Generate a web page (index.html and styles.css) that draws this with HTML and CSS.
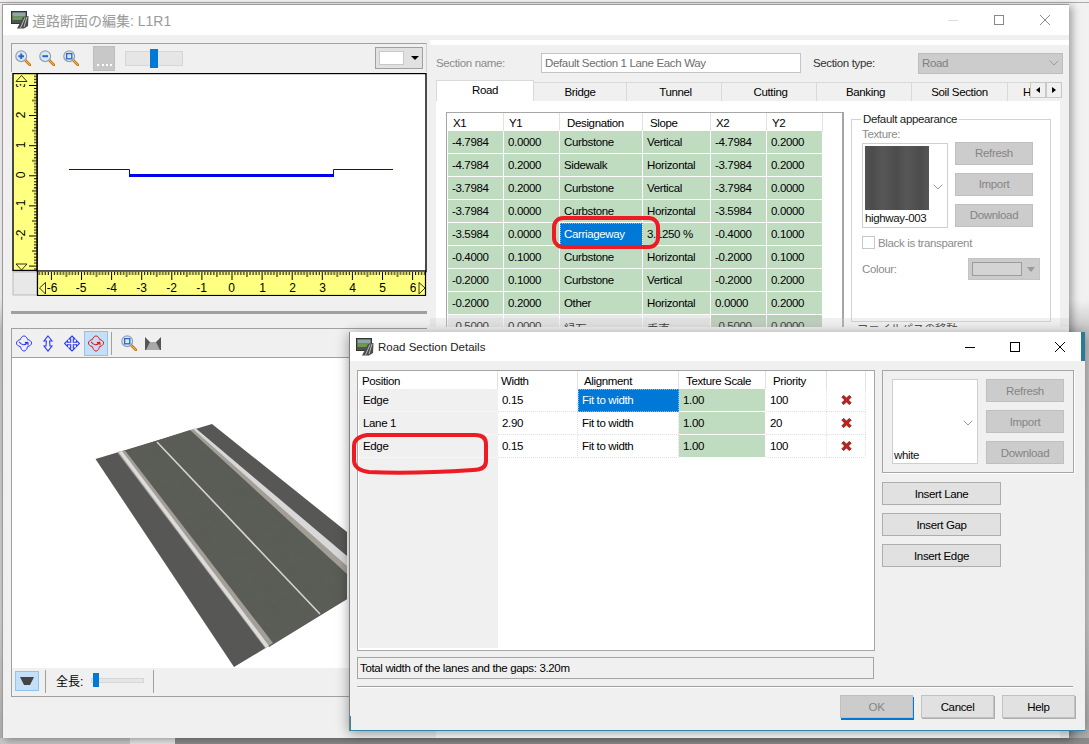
FILE: index.html
```html
<!DOCTYPE html>
<html lang="ja">
<head>
<meta charset="utf-8">
<title>道路断面の編集</title>
<link rel="stylesheet" href="styles.css">
</head>
<body>
<svg class="defs" width="0" height="0" aria-hidden="true">
  <defs>
    <symbol id="app" viewBox="0 0 18 18">
      <rect x="0.5" y="0.5" width="15" height="12" fill="#4a5650" stroke="#333"/>
      <rect x="1.500" y="1.500" width="13" height="4" fill="#8fa7a8"/>
      <rect x="1.500" y="5.500" width="13" height="3.500" fill="#6f9a4e"/>
      <path d="M6 17.500 L12 6 L17.500 5 L17 15 L13 17.500 Z" fill="#4b4b4b"/>
      <path d="M9.500 17 L14 6.500 M13 16 L16 6" stroke="#d6d6d6" stroke-width=".8" fill="none"/>
    </symbol>
    <symbol id="mag" viewBox="0 0 16 16">
      <path d="M10 10 L15 15" stroke="#c97a12" stroke-width="2.6" stroke-linecap="round"/>
      <path d="M10 10 L15 15" stroke="#f4b84e" stroke-width="1"/>
      <circle cx="6.200" cy="6.200" r="5.400" fill="#d9e8f5" stroke="#8fa3b5" stroke-width="1.200"/>
    </symbol>
    <symbol id="del" viewBox="0 0 12 12">
      <path d="M1 3 L3 1 L6 4 L9 1 L11 3 L8 6 L11 9 L9 11 L6 8 L3 11 L1 9 L4 6 Z" fill="#c4201c" stroke="#7c1a18" stroke-width="1"/>
    </symbol>
    <symbol id="orbit" viewBox="0 0 18 18">
      <path d="M9 .5 C11 .5 12.500 2.500 13 4.500 C15.500 5 17.500 6.500 17.500 8.500 C17.500 10.500 15.500 12 13 12.500 C12.500 15 11 17.500 9 17.500 C7 17.500 5.500 15 5 12.500 C2.500 12 .5 10.500 .5 8.500 C.5 6.500 2.500 5 5 4.500 C5.500 2.500 7 .5 9 .5 Z" fill="none" stroke="currentColor" stroke-width="1.100"/>
      <path d="M3.500 7 C6 11 10 12 13.500 7.500 M13.500 7.500 L13.500 11 M13.500 7.500 L10 8" fill="none" stroke="currentColor" stroke-width="1.200"/>
    </symbol>
    <symbol id="updown" viewBox="0 0 16 16">
      <path d="M8 .5 L12 5.500 L9.600 5.500 L10 10.500 L12 10.500 L8 15.500 L4 10.500 L6 10.500 L6.400 5.500 L4 5.500 Z" fill="none" stroke="currentColor" stroke-width="1.100"/>
    </symbol>
    <symbol id="cross" viewBox="0 0 16 16">
      <path d="M8 .5 L11 3.500 L9.300 3.500 L9.300 6.700 L12.500 6.700 L12.500 5 L15.500 8 L12.500 11 L12.500 9.300 L9.300 9.300 L9.300 12.500 L11 12.500 L8 15.500 L5 12.500 L6.700 12.500 L6.700 9.300 L3.500 9.300 L3.500 11 L.5 8 L3.500 5 L3.500 6.700 L6.700 6.700 L6.700 3.500 L5 3.500 Z" fill="none" stroke="currentColor" stroke-width="1.100"/>
    </symbol>
    <symbol id="chev" viewBox="0 0 10 6">
      <path d="M.7 .7 L5 5 L9.300 .7" fill="none" stroke="currentColor" stroke-width="1"/>
    </symbol>
  </defs>
</svg>

<div class="desktop">
  <section class="window main">
    <header class="titlebar">
      <svg class="appicon"><use href="#app"/></svg>
      <span class="title-main">道路断面の編集: L1R1</span>
      <span class="wctl wctl-inactive">
        <svg width="12" height="12" viewBox="0 0 12 12"><path d="M1 6.500 H11" stroke="#ddd" stroke-width="1"/></svg>
        <svg width="12" height="12" viewBox="0 0 12 12"><rect x="1.500" y="1.500" width="9" height="9" fill="none" stroke="#888"/></svg>
        <svg width="12" height="12" viewBox="0 0 12 12"><path d="M1 1 L11 11 M11 1 L1 11" stroke="#888"/></svg>
      </span>
    </header>
    <div class="mainbody">
      <div class="leftcol">
        <div class="edit-tools">
          <svg class="ti ti-first" viewBox="0 0 16 16"><use href="#mag"/><path d="M3.400 6.200 H9 M6.200 3.400 V9" stroke="#2a63c9" stroke-width="2"/></svg>
          <svg class="ti" viewBox="0 0 16 16"><use href="#mag"/><path d="M3.400 6.200 H9" stroke="#2a63c9" stroke-width="2"/></svg>
          <svg class="ti" viewBox="0 0 16 16"><use href="#mag"/><rect x="3.600" y="3.600" width="5.200" height="5.200" fill="none" stroke="#2a63c9" stroke-width="1.300"/></svg>
          <span class="grid-btn"><i></i></span>
          <span class="hslider"><i></i></span>
          <span class="colordrop"><i></i><b></b></span>
        </div>
        <svg class="profile" width="415" height="223" viewBox="12 73 415 223">
          <defs>
            <pattern id="ticksH" patternUnits="userSpaceOnUse" x="231.500" y="272" width="30.100" height="24">
              <path d="M.5 0 V8 M3.500 0 V3 M6.500 0 V3 M9.500 0 V3 M12.500 0 V3 M15.500 0 V5 M18.500 0 V3 M21.500 0 V3 M24.500 0 V3 M27.500 0 V3" stroke="#000" stroke-width="1"/>
            </pattern>
            <pattern id="ticksV" patternUnits="userSpaceOnUse" x="13" y="175.300" width="24" height="30.100">
              <path d="M24 .5 H16 M24 3.500 H21 M24 6.500 H21 M24 9.500 H21 M24 12.500 H21 M24 15.500 H19 M24 18.500 H21 M24 21.500 H21 M24 24.500 H21 M24 27.500 H21" stroke="#000" stroke-width="1"/>
            </pattern>
            <clipPath id="clip3"><rect x="13" y="84" width="24" height="3"/></clipPath>
          </defs>
          <rect x="12" y="73" width="415" height="223" fill="#f0f0f0"/>
          <rect x="37" y="73.500" width="389" height="198" fill="#fff" stroke="#000" stroke-width="1.400"/>
          <rect x="13" y="73.500" width="24" height="197" fill="#ffff80" stroke="#000" stroke-width="1.400"/>
          <rect x="13" y="73.500" width="24" height="197" fill="url(#ticksV)"/>
          <rect x="13" y="272" width="24" height="23" fill="#e8e8e8" stroke="#bbb"/>
          <rect x="37.500" y="271" width="388" height="24.500" fill="#ffff80" stroke="#000" stroke-width="1.200"/>
          <rect x="38" y="272" width="387" height="23" fill="url(#ticksH)"/>
          <g class="ruler-num" text-anchor="middle">
            <text x="52" y="292">-6</text><text x="81" y="292">-5</text><text x="111.500" y="292">-4</text><text x="141.500" y="292">-3</text>
            <text x="171.500" y="292">-2</text><text x="201.500" y="292">-1</text><text x="231.500" y="292">0</text><text x="262.500" y="292">1</text>
            <text x="292.500" y="292">2</text><text x="322.500" y="292">3</text><text x="352.500" y="292">4</text><text x="382.500" y="292">5</text><text x="413" y="292">6</text>
            <g clip-path="url(#clip3)"><text transform="translate(25 85) rotate(-90)">3</text></g>
            <text transform="translate(25 115) rotate(-90)">2</text>
            <text transform="translate(25 145) rotate(-90)">1</text>
            <text transform="translate(25 175) rotate(-90)">0</text>
            <text transform="translate(25 205) rotate(-90)">-1</text>
            <text transform="translate(25 235) rotate(-90)">-2</text>
          </g>
          <rect x="416" y="280" width="4" height="14" fill="#ffff80"/>
          <path d="M21.500 75.500 L27 81.500 L16 81.500 Z M16 264 L27 264 L21.500 270 Z M39.500 288 L45.500 282.500 L45.500 294 Z M425 288 L419 282.500 L419 294 Z" fill="#ffff80" stroke="#000" stroke-width=".8"/>
          <path d="M69 169.500 H129.500 V175 M333.500 175 V169.500 H393" fill="none" stroke="#0000f0" stroke-width="1"/>
          <rect x="129" y="174" width="205" height="3" fill="#0000f0"/>
        </svg>
        <div class="splitter"></div>
        <div class="view3d">
          <div class="view-tools">
            <svg class="vi vi-blue"><use href="#orbit"/></svg>
            <svg class="vi vi-blue"><use href="#updown"/></svg>
            <svg class="vi vi-blue"><use href="#cross"/></svg>
            <span class="vi-active"><svg class="vi vi-red"><use href="#orbit"/></svg></span>
            <span class="tsep"></span>
            <svg class="ti ti-view" viewBox="0 0 16 16"><use href="#mag"/><rect x="3.600" y="3.600" width="5.200" height="5.200" fill="none" stroke="#2a63c9" stroke-width="1.300"/></svg>
            <svg class="roadicon" viewBox="0 0 16 13"><path d="M0 0 L5 5 L5 13 L0 13 Z M16 0 L11 5 L11 13 L16 13 Z" fill="#555"/><path d="M5 5 H11 L15 13 H1 Z" fill="#a8a8a8"/></svg>
          </div>
          <svg class="roadview" width="414" height="310" viewBox="12 358 414 310">
            <defs>
              <filter id="mottle" x="0" y="0" width="100%" height="100%">
                <feTurbulence type="fractalNoise" baseFrequency="0.09" numOctaves="3" seed="4"/>
                <feColorMatrix values="0 0 0 0 0.1  0 0 0 0 0.1  0 0 0 0 0.09  0.5 0.5 0 0 -0.32"/>
                <feComposite in2="SourceGraphic" operator="in"/>
                <feMerge><feMergeNode in="SourceGraphic"/><feMergeNode/></feMerge>
              </filter>
            </defs>
            <rect x="12" y="358" width="414" height="310" fill="#fff"/>
            <path d="M95.500 459 L212 424 L347 532 L347 599 L234 667 Z" fill="#575756"/>
            <path d="M125 451 L190 430 L347 566 L347 599 L269 647 Z" fill="#5c5d58" filter="url(#mottle)"/>
            <path d="M117 452 L125 450.500 L273 643 L265 648 Z" fill="#a39e96"/>
            <path d="M118.500 452 L122 451 L269 646 L266 648 Z" fill="#dcdcdc"/>
            <path d="M190 430 L195 428.500 L347 560 L347 574 Z" fill="#a39e96"/>
            <path d="M193 429 L196 428.500 L347 556 L347 566 Z" fill="#d8d8d8"/>
            <path d="M157 442 L320 614" stroke="#d4d4d0" stroke-width="1.600"/>
          </svg>
          <div class="view-bottom">
            <span class="btm-active"><svg width="14" height="8" viewBox="0 0 14 8"><path d="M0 0 H14 L10 8 H4 Z" fill="#444"/></svg></span>
            <span class="tsep tsep-a"></span>
            <span class="len-label">全長:</span>
            <span class="len-slider"><i></i></span>
            <span class="tsep tsep-b"></span>
          </div>
        </div>
      </div>

      <div class="rightcol">
        <div class="namerow">
          <span class="lbl-dis lbl-name">Section name:</span>
          <span class="textinput">Default Section 1 Lane Each Way</span>
          <span class="lbl-type">Section type:</span>
          <span class="select-dis">Road<svg width="10" height="6"><use href="#chev"/></svg></span>
        </div>
        <div class="tabs">
          <span class="tab tab-active">Road</span>
          <span class="tab tab-w93">Bridge</span>
          <span class="tab tab-w95">Tunnel</span>
          <span class="tab tab-w95">Cutting</span>
          <span class="tab tab-w95">Banking</span>
          <span class="tab tab-w96">Soil Section</span>
          <span class="tab tab-clip">H</span>
          <span class="tabscroll"><i class="tri-l"></i><i class="tri-r"></i></span>
        </div>
        <div class="tabpanel">
          <div class="datagrid">
            <table class="tbl tbl-road">
              <thead><tr><th>X1</th><th>Y1</th><th>Designation</th><th>Slope</th><th>X2</th><th>Y2</th></tr></thead>
              <tbody>
                <tr><td>-4.7984</td><td>0.0000</td><td>Curbstone</td><td>Vertical</td><td>-4.7984</td><td>0.2000</td></tr>
                <tr><td>-4.7984</td><td>0.2000</td><td>Sidewalk</td><td>Horizontal</td><td>-3.7984</td><td>0.2000</td></tr>
                <tr><td>-3.7984</td><td>0.2000</td><td>Curbstone</td><td>Vertical</td><td>-3.7984</td><td>0.0000</td></tr>
                <tr><td>-3.7984</td><td>0.0000</td><td>Curbstone</td><td>Horizontal</td><td>-3.5984</td><td>0.0000</td></tr>
                <tr><td>-3.5984</td><td>0.0000</td><td class="sel">Carriageway</td><td>3.1250 %</td><td>-0.4000</td><td>0.1000</td></tr>
                <tr><td>-0.4000</td><td>0.1000</td><td>Curbstone</td><td>Horizontal</td><td>-0.2000</td><td>0.1000</td></tr>
                <tr><td>-0.2000</td><td>0.1000</td><td>Curbstone</td><td>Vertical</td><td>-0.2000</td><td>0.2000</td></tr>
                <tr><td>-0.2000</td><td>0.2000</td><td>Other</td><td>Horizontal</td><td>0.0000</td><td>0.2000</td></tr>
                <tr class="ghost"><td>-0.5000</td><td>0.0000</td><td>縁石</td><td>垂直</td><td class="ghost-g">-0.5000</td><td class="ghost-g">0.0000</td></tr>
              </tbody>
            </table>
          </div>
          <div class="groupcol">
            <fieldset class="group">
              <legend>Default appearance</legend>
              <div class="lbl-dis lbl-tex">Texture:</div>
              <div class="texrow">
                <div class="texbox">
                  <div class="swatch"></div>
                  <svg class="texchev" width="10" height="6"><use href="#chev"/></svg>
                  <span class="texname">highway-003</span>
                </div>
                <div class="btncol">
                  <span class="btn-dis">Refresh</span>
                  <span class="btn-dis">Import</span>
                  <span class="btn-dis">Download</span>
                </div>
              </div>
              <div class="checkrow"><i class="check"></i><span class="lbl-dis">Black is transparent</span></div>
              <div class="colourrow">
                <span class="lbl-dis">Colour:</span>
                <span class="colourbtn"><i></i><b></b></span>
              </div>
            </fieldset>
            <div class="ghost-label">ファイルパスの移動</div>
          </div>
        </div>
      </div>
    </div>
  </section>

  <div class="fadeband"></div>

  <section class="window dialog">
    <header class="dtitle">
      <svg class="appicon"><use href="#app"/></svg>
      <span class="dtitle-text">Road Section Details</span>
      <span class="wctl wctl-active">
        <svg width="12" height="12" viewBox="0 0 12 12"><path d="M1 6.500 H11" stroke="#000"/></svg>
        <svg width="12" height="12" viewBox="0 0 12 12"><rect x="1.500" y="1.500" width="9" height="9" fill="none" stroke="#000"/></svg>
        <svg width="12" height="12" viewBox="0 0 12 12"><path d="M1 1 L11 11 M11 1 L1 11" stroke="#000"/></svg>
      </span>
    </header>
    <div class="dbody">
      <div class="dmain">
        <div class="dleft">
          <div class="lanegrid">
            <table class="tbl tbl-lanes">
              <thead><tr><th>Position</th><th>Width</th><th>Alignment</th><th>Texture Scale</th><th>Priority</th><th></th></tr></thead>
              <tbody>
                <tr><td class="pos">Edge</td><td>0.15</td><td class="sel">Fit to width</td><td class="grn">1.00</td><td>100</td><td class="x"><svg width="11" height="12"><use href="#del"/></svg></td></tr>
                <tr><td class="pos">Lane 1</td><td>2.90</td><td>Fit to width</td><td class="grn">1.00</td><td>20</td><td class="x"><svg width="11" height="12"><use href="#del"/></svg></td></tr>
                <tr><td class="pos">Edge</td><td>0.15</td><td>Fit to width</td><td class="grn">1.00</td><td>100</td><td class="x"><svg width="11" height="12"><use href="#del"/></svg></td></tr>
              </tbody>
            </table>
          </div>
          <div class="totalbar">Total width of the lanes and the gaps: 3.20m</div>
        </div>
        <div class="dright">
          <div class="dtexgroup">
            <div class="texbox texbox-white">
              <svg class="texchev" width="10" height="6"><use href="#chev"/></svg>
              <span class="texname">white</span>
            </div>
            <div class="btncol">
              <span class="btn-dis">Refresh</span>
              <span class="btn-dis">Import</span>
              <span class="btn-dis">Download</span>
            </div>
          </div>
          <span class="btn-ins">Insert Lane</span>
          <span class="btn-ins">Insert Gap</span>
          <span class="btn-ins">Insert Edge</span>
        </div>
      </div>
      <div class="dsep"></div>
      <div class="dfoot">
        <span class="fbtn fbtn-ok">OK</span>
        <span class="fbtn">Cancel</span>
        <span class="fbtn">Help</span>
      </div>
    </div>
  </section>

  <svg class="redmark redmark-a" width="110" height="35" viewBox="0 0 110 35"><rect x="2" y="2" width="104" height="29" rx="9" fill="none" stroke="#ed1c24" stroke-width="4"/></svg>
  <svg class="redmark redmark-b" width="140" height="45" viewBox="0 0 140 45"><path d="M16 3 H124 Q135 3 135 12 V29 Q135 38 122 38 Q60 42 18 40 Q3 38 3 28 V14 Q3 5 16 3 Z" fill="none" stroke="#ed1c24" stroke-width="4"/></svg>
</div>
</body>
</html>
```

FILE: styles.css
```css
* { box-sizing: border-box; }
html, body { margin: 0; padding: 0; height: 100%; overflow: hidden; }
body { font-family: "Liberation Sans", "Noto Sans CJK JP", sans-serif; font-size: 11.5px; letter-spacing: -.35px; color: #000; }
.defs { position: absolute; }
.desktop {
  position: relative; width: 1089px; height: 744px; overflow: hidden;
  background:
    linear-gradient(90deg, #c8c8c8 0 130px, #e8e8e8 130px 175px, #8c8c8c 175px 1089px) 0 738px / 100% 6px no-repeat,
    linear-gradient(#ababab, #ababab) 0 2px / 100% 1px no-repeat,
    linear-gradient(#f1f1f1 0 300px, #c4c4c4 330px, #cfcfcf 620px, #b0b0b0 744px);
}
.window { position: absolute; display: flex; flex-direction: column; }

/* main window */
.main {
  left: 2px; top: 4px; width: 1067px; height: 734px;
  border: 1px solid #9b9b9b; border-bottom: 0; border-right: 0;
  background: #f0f0f0; box-shadow: 3px 2px 8px rgba(0,0,0,.35);
}
.titlebar { height: 30px; background: #fff; display: flex; align-items: center; padding-left: 8px; flex: none; }
.appicon { width: 18px; height: 18px; flex: none; }
.title-main { margin-left: 3px; font-size: 14px; letter-spacing: 0; color: #9a9a9a; }
.wctl { margin-left: auto; display: flex; }
.wctl-inactive { gap: 34px; padding-right: 18px; }
.mainbody { flex: 1; display: flex; min-height: 0; }
.leftcol { width: 427px; flex: none; padding: 8px 0 0 8px; }

.edit-tools {
  width: 416px; height: 29px; display: flex; align-items: center;
  border-top: 1px solid #a0a0a0; border-left: 1px solid #a0a0a0; border-right: 1px solid #d0d0d0;
  position: relative;
}
.ti { width: 16px; height: 16px; margin-left: 8px; flex: none; }
.ti-first { margin-left: 3px; }
.grid-btn { width: 22px; height: 25px; margin-left: 14px; background: #c8c8c8; border: 1px solid #bdbdbd; display: flex; align-items: flex-end; justify-content: center; padding-bottom: 4px; flex: none; }
.grid-btn i { width: 15px; border-bottom: 2px dotted #fff; }
.hslider { width: 58px; height: 15px; margin-left: 10px; background: #e6e6e6; border: 1px solid #d6d6d6; position: relative; flex: none; }
.hslider i { position: absolute; left: 24px; top: -3px; width: 8px; height: 19px; background: #0078d7; }
.colordrop { width: 48px; height: 22px; margin-left: auto; margin-right: 3px; background: #e1e1e1; border: 1px solid #a0a0a0; display: flex; align-items: center; padding-left: 3px; flex: none; }
.colordrop i { width: 25px; height: 14px; background: #fff; border: 1px solid #c8c8c8; }
.colordrop b { margin-left: 7px; border: 4px solid transparent; border-top: 4px solid #000; border-bottom: 0; }
.profile { display: block; margin-left: 1px; margin-top: 1px; }
.ruler-num { font-family: "Liberation Sans", sans-serif; font-size: 12px; letter-spacing: 0; fill: #000; }
.splitter { width: 416px; height: 3px; background: #a0a0a0; margin-top: 15px; }

.view3d { width: 416px; height: 369px; margin-top: 14px; border: 1px solid #a0a0a0; border-right: 0; display: flex; flex-direction: column; }
.view-tools { height: 29px; flex: none; display: flex; align-items: center; border-bottom: 1px solid #a0a0a0; }
.vi { width: 16px; height: 17px; flex: none; }
.vi-blue { color: #2a38ff; margin-left: 8px; }
.view-tools .vi-blue:first-child { margin-left: 4px; }
.vi-red { color: #d81818; }
.vi-active { width: 24px; height: 25px; margin-left: 4px; background: #c4dff6; border: 1px solid #8ec4f0; display: flex; align-items: center; justify-content: center; flex: none; }
.tsep { width: 1px; height: 23px; background: #a0a0a0; margin-left: 3px; flex: none; }
.ti-view { margin-left: 9px; }
.roadicon { width: 16px; height: 13px; margin-left: 8px; flex: none; }
.roadview { display: block; flex: none; }
.view-bottom { flex: 1; display: flex; align-items: center; padding: 0 0 2px 3px; background: #f0f0f0; }
.btm-active { width: 24px; height: 20px; background: #c4dff6; border: 1px solid #8ec4f0; display: flex; align-items: center; justify-content: center; flex: none; }
.tsep-a { margin-left: 6px; }
.len-label { margin: -2px 0 0 10px; font-size: 12px; letter-spacing: 0; width: 35px; flex: none; }
.len-slider { width: 53px; height: 5px; background: #e6e6e6; border: 1px solid #d6d6d6; position: relative; flex: none; margin-top: -1px; }
.len-slider i { position: absolute; left: 1px; top: -6px; width: 6px; height: 14px; background: #0078d7; }
.tsep-b { margin-left: 9px; }

/* right column */
.rightcol { flex: 1; min-width: 0; display: flex; flex-direction: column; margin-top: 5px; border-top: 5px solid #fff; padding-top: 8px; }
.namerow { height: 20px; display: flex; align-items: center; padding-left: 6px; flex: none; }
.lbl-dis { color: #8c8c8c; }
.lbl-name { width: 105px; flex: none; }
.textinput { width: 260px; height: 20px; background: #fff; border: 1px solid #c4c4c4; padding-left: 3px; line-height: 18px; color: #6d6d6d; flex: none; }
.lbl-type { margin-left: 12px; width: 105px; flex: none; color: #333; }
.select-dis { width: 145px; height: 21px; background: #cccccc; border: 1px solid #bdbdbd; padding: 0 3px; display: flex; align-items: center; justify-content: space-between; color: #808080; flex: none; }
.select-dis svg, .texchev { color: #9a9a9a; }
.tabs { display: flex; align-items: flex-end; margin: 7px 0 0 6px; height: 21px; flex: none; position: relative; }
.tab { height: 19px; line-height: 19px; text-align: center; background: #f0f0f0; border: 1px solid #d9d9d9; border-bottom: 0; border-left: 0; flex: none; }
.tab-active { width: 98px; height: 21px; line-height: 18px; background: #fff; border: 1px solid #d9d9d9; border-bottom: 0; }
.tab-w93 { width: 93px; }
.tab-w95 { width: 95px; padding-left: 3px; }
.tab-w96 { width: 96px; }
.tab-clip { width: 22px; text-align: left; padding-left: 15px; border-right: 0; }
.tabscroll { position: absolute; left: 594px; top: 2px; width: 32px; height: 16px; display: flex; }
.tabscroll i { width: 16px; height: 16px; background: #f0f0f0; border: 1px solid #c8c8c8; display: flex; align-items: center; justify-content: center; }
.tri-l::before { content: ""; border: 3.5px solid transparent; border-right: 4px solid #000; border-left: 0; }
.tri-r::before { content: ""; border: 3.5px solid transparent; border-left: 4px solid #000; border-right: 0; }
.tabpanel { width: 624px; margin-left: 6px; flex: 1; background: #fff; display: flex; padding: 11px 0 0 10px; min-height: 0; }
.datagrid { width: 398px; height: 230px; border: 1px solid #a6a6a6; border-bottom: 0; border-right: 2px solid #a6a6a6; padding-left: 1px; flex: none; overflow: hidden; }
.tbl { border-collapse: separate; border-spacing: 0; table-layout: fixed; }
.tbl th { font-weight: normal; text-align: left; height: 18px; padding: 1px 0 0 5px; background: #fff; border-right: 1px solid #e2e2e2; white-space: nowrap; overflow: hidden; }
.tbl td { height: 23px; padding: 0 0 0 4px; white-space: nowrap; overflow: hidden; border-right: 1px solid #fff; border-bottom: 1px solid #fff; }
.tbl-road { width: 374px; }
.tbl-road th:nth-child(1), .tbl-road th:nth-child(2), .tbl-road th:nth-child(5), .tbl-road th:nth-child(6) { width: 56px; }
.tbl-road th:nth-child(3) { width: 83px; padding-left: 7px; }
.tbl-road th:nth-child(4) { width: 68px; padding-left: 7px; }
.tbl-road td { background: #c0dcc0; }
.tbl td.sel { background: #0078d7; color: #fff; outline: 1px dotted #f2a64a; outline-offset: -1px; }
.tbl-road tr.ghost td { background: #e8e8e8; border-bottom: 0; vertical-align: top; padding-top: 5px; }
.tbl-road tr.ghost td.ghost-g { background: #b7cfb7; }

.groupcol { display: flex; flex-direction: column; margin-left: 7px; flex: none; }
.group { width: 200px; height: 210px; margin: 0; padding: 0 10px; border: 1px solid #d2d2d2; flex: none; min-width: 0; }
.group legend { padding: 0 2px; line-height: 15px; margin-left: -1px; color: #222; }
.ghost-label { font-size: 11.5px; line-height: 14px; margin: 0 0 0 6px; color: #222; }
.lbl-tex { height: 15px; line-height: 15px; }
.texrow { display: flex; align-items: flex-start; }
.texbox { width: 86px; height: 85px; margin-top: 1px; background: #fff; border: 1px solid #cfcfcf; position: relative; flex: none; }
.swatch { position: absolute; left: 2px; top: 2px; width: 64px; height: 64px; background: repeating-linear-gradient(90deg, #525252, #4c4c4c 8px, #575757 17px, #525252 24px); }
.texchev { position: absolute; right: 4px; top: 40px; }
.texname { position: absolute; left: 2px; bottom: 1px; line-height: 16px; color: #111; }
.texbox-white .texname { left: 1px; bottom: 0; }
.btncol { margin-left: 7px; display: flex; flex-direction: column; gap: 8px; flex: none; }
.btn-dis { width: 78px; height: 23px; background: #cccccc; border: 1px solid #bfbfbf; color: #858585; text-align: center; line-height: 22px; display: block; }
.group .btn-dis { line-height: 21px; }
.checkrow { display: flex; align-items: center; margin-top: 8px; height: 13px; }
.check { width: 13px; height: 13px; background: #fff; border: 1px solid #c8c8c8; margin-right: 3px; flex: none; }
.colourrow { display: flex; align-items: center; margin-top: 9px; height: 22px; }
.colourrow .lbl-dis { width: 106px; flex: none; }
.colourbtn { width: 72px; height: 22px; background: #cccccc; border: 1px solid #c4c4c4; display: flex; align-items: center; padding-left: 3px; flex: none; }
.colourbtn i { width: 50px; height: 14px; border: 1px solid #9c9c9c; background: #d4d4d4; }
.colourbtn b { margin-left: 5px; border: 4px solid transparent; border-top: 5px solid #9a9a9a; border-bottom: 0; }

.fadeband { position: absolute; left: 430px; top: 318px; width: 639px; height: 14px; background: linear-gradient(rgba(205,205,205,.3) 0 9px, #f0f0f0 9px); }

/* dialog */
.dialog {
  left: 349px; top: 332px; width: 736px; height: 399px;
  background: #f0f0f0; border-bottom: 1px solid #2f86a8; border-left: 1px solid #7e7e7e;
  box-shadow: 0 2px 12px rgba(0,0,0,.4);
}
.dialog::after { content: ""; position: absolute; left: 0; bottom: 0; width: 1px; height: 14px; background: #2f86a8; }
.dtitle { height: 29px; flex: none; background: #fff; display: flex; align-items: center; padding-left: 6px; border-right: 4px solid #2a7a9c; }
.dtitle-text { margin-left: 4px; letter-spacing: 0; color: #222; }
.wctl-active { gap: 33px; padding-right: 15px; }
.dbody { flex: 1; display: flex; flex-direction: column; padding: 9px 0 0 7px; min-height: 0; }
.dmain { display: flex; flex: none; height: 309px; }
.dleft { width: 518px; flex: none; }
.lanegrid { height: 281px; border: 1px solid #a6a6a6; padding: 0 1px 3px 1px; background: #fff; }
.tbl-lanes { width: 507px; height: 277px; display: block; background: linear-gradient(90deg, #f0f0f0 139px, transparent 139px); }
.tbl-lanes th:nth-child(1) { width: 139px; padding-left: 3px; }
.tbl-lanes th:nth-child(2) { width: 80px; padding-left: 3px; }
.tbl-lanes th:nth-child(3) { width: 101px; padding-left: 6px; }
.tbl-lanes th:nth-child(4) { width: 87px; padding-left: 7px; }
.tbl-lanes th:nth-child(5) { width: 61px; padding-left: 7px; }
.tbl-lanes th:nth-child(6) { width: 39px; }
.tbl-lanes td { border-right: 1px dotted #e0e0e0; border-bottom: 1px dotted #e0e0e0; background: #fff; }
.tbl-lanes td.pos { background: #f0f0f0; padding-left: 4px; border: 0; border-bottom: 1px dotted #fff; }
.tbl-lanes td.grn { background: #c0dcc0; border-right: 1px solid #fff; border-bottom: 1px solid #fff; }
.tbl-lanes td.x { text-align: center; padding: 0; }
.tbl-lanes td.x svg { display: block; margin: 0 auto; }
.totalbar { height: 22px; margin-top: 6px; border: 1px solid #a6a6a6; line-height: 20px; padding-left: 2px; width: 517px; }
.dright { width: 192px; margin-left: 7px; flex: none; display: flex; flex-direction: column; align-items: flex-start; }
.dtexgroup { width: 192px; height: 103px; border: 1px solid #a6a6a6; display: flex; padding: 8px 0 0 9px; margin-bottom: 9px; box-shadow: 1px 1px 0 #fff; flex: none; }
.texbox-white { margin-top: 0; }
.dtexgroup .texbox { height: 85px; }
.dtexgroup .btncol { margin-left: 8px; }
.btn-ins { width: 119px; height: 23px; background: #e1e1e1; border: 1px solid #adadad; text-align: center; line-height: 22px; margin-bottom: 8px; display: block; flex: none; }
.dsep { width: 716px; height: 2px; border-top: 1px solid #a0a0a0; border-bottom: 1px solid #fff; margin-top: 7px; flex: none; }
.dfoot { display: flex; justify-content: flex-end; gap: 8px; width: 718px; margin-top: 7px; flex: none; }
.fbtn { width: 73px; height: 23px; background: #e1e1e1; border: 1px solid #c2c2c2; box-shadow: 1px 1px 0 #adadad; text-align: center; line-height: 22px; display: block; flex: none; }
.fbtn-ok { background: #cccccc; border-color: #bfbfbf; color: #858585; box-shadow: 1px 2px 0 #0078d7; }

.redmark { position: absolute; }
.redmark-a { left: 552px; top: 216px; }
.redmark-b { left: 351px; top: 432px; }
```
